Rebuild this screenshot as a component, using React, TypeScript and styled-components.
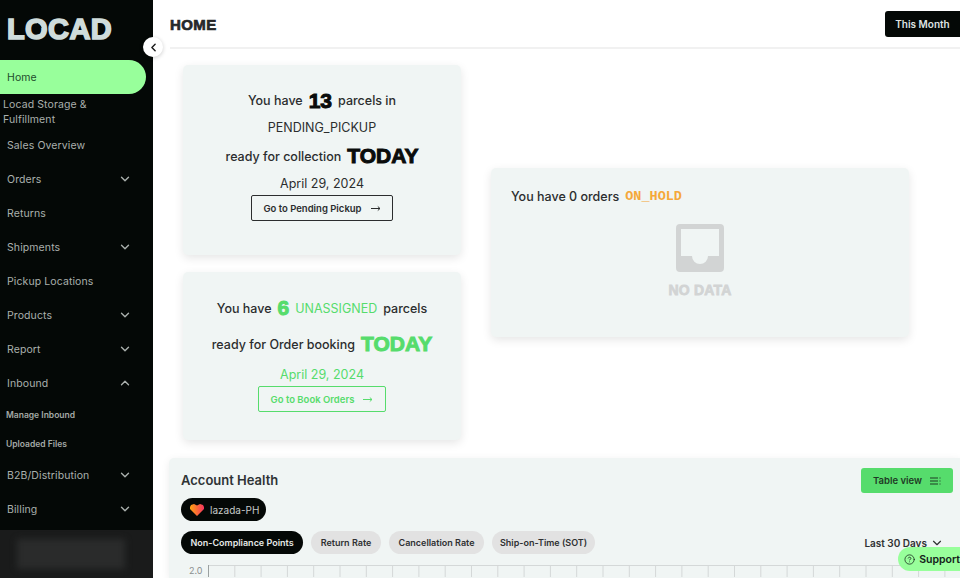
import React, { FC } from 'react';
import styled, { createGlobalStyle } from 'styled-components';
import { ChevronDown, ChevronLeft, ChevronUp, CircleHelp } from 'lucide-react';

const bodyFont = `Inter, 'Noto Sans', sans-serif`;
const blockFont = `'Liberation Sans', Arial, sans-serif`;
const green = '#56dc6c';

const GlobalStyle = createGlobalStyle`
    html, body {
        margin: 0;
        padding: 0;
        width: 960px;
        height: 578px;
        overflow: hidden;
        background: #fff;
        font-family: ${bodyFont};
    }
    * {
        box-sizing: border-box;
    }
`;

const Page = styled.div`
    position: relative;
    display: flex;
    width: 960px;
    height: 578px;
    overflow: hidden;
`;

const Sidebar = styled.aside`
    width: 153px;
    flex: none;
    height: 100%;
    background: #040806;
    display: flex;
    flex-direction: column;
`;

const Logo = styled.div`
    position: relative;
    height: 60px;
    padding: 13px 0 0 7px;
    font-family: ${blockFont};
    font-weight: 700;
    font-size: 29px;
    line-height: 32px;
    letter-spacing: 0.4px;
    color: #cfdcdb;
    -webkit-text-stroke: 1.6px #cfdcdb;
`;

const LogoHouse = styled.svg`
    position: absolute;
    left: 33px;
    top: 23px;
`;

const Nav = styled.nav`
    flex: 1;
    display: flex;
    flex-direction: column;
`;

const NavRow = styled.div<{ $active?: boolean }>`
    height: ${({ $active }) => ($active ? 34 : 34)}px;
    width: ${({ $active }) => ($active ? '146px' : '100%')};
    flex: none;
    display: flex;
    align-items: center;
    justify-content: space-between;
    padding: 0 21px 0 7px;
    font-size: 10.5px;
    letter-spacing: 0.1px;
    color: ${({ $active }) => ($active ? '#1f4d2c' : '#aab0ad')};
    background: ${({ $active }) => ($active ? '#98ff9b' : 'transparent')};
    border-radius: ${({ $active }) => ($active ? '0 17px 17px 0' : '0')};
`;

const WrappedRow = styled.div`
    height: 34px;
    flex: none;
    padding: 3px 20px 0 3px;
    font-size: 10.5px;
    line-height: 15px;
    letter-spacing: 0.1px;
    color: #aab0ad;
`;

const SubRow = styled.div<{ $height: number }>`
    height: ${({ $height }) => $height}px;
    flex: none;
    display: flex;
    align-items: center;
    padding-left: 6px;
    font-size: 8.5px;
    font-weight: 600;
    color: #a4aaa7;
`;

const SidebarFooter = styled.div`
    height: 48px;
    flex: none;
    background: #1a1b1b;
    display: flex;
    align-items: center;
    padding-left: 17px;
`;

const BlurredUser = styled.div`
    width: 108px;
    height: 30px;
    background: #2a2b2b;
    filter: blur(3px);
`;

const CollapseButton = styled.div`
    position: absolute;
    left: 143px;
    top: 37px;
    width: 20px;
    height: 20px;
    border-radius: 50%;
    background: #fff;
    box-shadow: 0 1px 4px rgba(0, 0, 0, 0.2);
    display: flex;
    align-items: center;
    justify-content: center;
    color: #1a1a1a;
`;

const Main = styled.main`
    flex: 1;
    min-width: 0;
    display: flex;
    flex-direction: column;
`;

const Header = styled.header`
    height: 49px;
    flex: none;
    margin-left: 17px;
    padding-top: 11px;
    border-bottom: 2px solid #f1f1f1;
    display: flex;
    justify-content: space-between;
    align-items: flex-start;
`;

const PageTitle = styled.h1`
    margin: 0;
    font-family: ${blockFont};
    font-weight: 700;
    font-size: 15px;
    line-height: 28px;
    letter-spacing: 0.4px;
    color: #26282a;
    -webkit-text-stroke: 0.7px #26282a;
`;

const MonthButton = styled.div`
    width: 75px;
    height: 26px;
    background: #040806;
    color: #dfe3e1;
    border-radius: 3px 0 0 3px;
    font-size: 10px;
    font-weight: 600;
    display: flex;
    align-items: center;
    justify-content: center;
`;

const CardGrid = styled.div`
    display: grid;
    grid-template-columns: 278px 418px;
    column-gap: 30px;
    align-items: center;
    padding: 16px 0 0 30px;
`;

const LeftColumn = styled.div`
    display: flex;
    flex-direction: column;
    gap: 17px;
`;

const Card = styled.section<{ $height: number }>`
    height: ${({ $height }) => $height}px;
    background: #f0f5f4;
    border-radius: 5px;
    box-shadow: 0 3px 10px rgba(0, 0, 0, 0.1);
    display: flex;
    flex-direction: column;
    align-items: center;
`;

const CardLine = styled.div<{ $height: number; $color?: string }>`
    height: ${({ $height }) => $height}px;
    display: flex;
    align-items: center;
    justify-content: center;
    gap: 6px;
    font-size: 12.5px;
    font-weight: 500;
    white-space: nowrap;
    color: ${({ $color }) => $color || '#2b2d2e'};
`;

const Block = styled.span<{ $size: number; $color?: string }>`
    font-family: ${blockFont};
    font-weight: 700;
    font-size: ${({ $size }) => $size}px;
    color: ${({ $color }) => $color || '#0a0c0b'};
    -webkit-text-stroke: 1px ${({ $color }) => $color || '#0a0c0b'};
`;

const Status = styled.span<{ $color?: string }>`
    font-weight: 400;
    color: ${({ $color }) => $color || '#2b2d2e'};
`;

const GoButton = styled.div<{ $color: string; $width: number }>`
    width: ${({ $width }) => $width}px;
    height: 26px;
    flex: none;
    border: 1px solid ${({ $color }) => $color};
    border-radius: 2px;
    color: ${({ $color }) => $color};
    font-size: 9.5px;
    font-weight: 600;
    display: flex;
    align-items: center;
    justify-content: center;
    gap: 8px;
`;

const HoldCard = styled.section`
    height: 169px;
    background: #f0f5f4;
    border-radius: 5px;
    box-shadow: 0 3px 10px rgba(0, 0, 0, 0.1);
    padding: 0 20px;
    display: flex;
    flex-direction: column;
`;

const HoldTitle = styled.div`
    height: 56px;
    flex: none;
    display: flex;
    align-items: center;
    gap: 6px;
    font-size: 12.5px;
    font-weight: 500;
    color: #2b2d2e;
`;

const HoldStatus = styled.span`
    font-family: 'Liberation Mono', monospace;
    font-weight: 700;
    font-size: 13.5px;
    color: #f5a83a;
`;

const EmptyState = styled.div`
    display: flex;
    flex-direction: column;
    align-items: center;
    gap: 11px;
`;

const NoData = styled.div`
    font-family: ${blockFont};
    font-weight: 700;
    font-size: 14px;
    line-height: 14px;
    letter-spacing: 0.2px;
    color: #d2d4d4;
    -webkit-text-stroke: 0.8px #d2d4d4;
`;

const HealthPanel = styled.section`
    flex: 1;
    margin: 18px 0 0 16px;
    background: #f0f5f4;
    border-radius: 5px 0 0 0;
    box-shadow: 0 2px 8px rgba(0, 0, 0, 0.08);
    padding: 10px 7px 0 12px;
    min-height: 0;
`;

const HealthTop = styled.div`
    display: flex;
    justify-content: space-between;
    align-items: flex-start;
    height: 30px;
`;

const HealthTitle = styled.h2`
    margin: 0;
    font-size: 13px;
    font-weight: 600;
    line-height: 24px;
    color: #2f3334;
`;

const TableButton = styled.div`
    width: 92px;
    height: 25px;
    background: ${green};
    border-radius: 3px;
    font-size: 9.5px;
    font-weight: 600;
    color: #1f3a25;
    display: flex;
    align-items: center;
    justify-content: center;
    gap: 8px;
`;

const ShopChip = styled.div`
    width: 85px;
    height: 23px;
    background: #040806;
    border-radius: 12px;
    color: #c7cbc9;
    font-size: 10px;
    display: flex;
    align-items: center;
    gap: 6px;
    padding-left: 9px;
`;

const TabRow = styled.div`
    margin-top: 10px;
    height: 23px;
    display: flex;
    align-items: center;
    gap: 8px;
`;

const Tab = styled.div<{ $active?: boolean; $width: number }>`
    width: ${({ $width }) => $width}px;
    height: 23px;
    border-radius: 12px;
    background: ${({ $active }) => ($active ? '#040806' : '#e2e2e2')};
    color: ${({ $active }) => ($active ? '#e4e7e5' : '#2f3132')};
    font-size: 9px;
    font-weight: 600;
    white-space: nowrap;
    display: flex;
    align-items: center;
    justify-content: center;
`;

const RangeSelect = styled.div`
    margin-left: auto;
    margin-right: 9px;
    display: flex;
    align-items: center;
    gap: 3px;
    font-size: 10px;
    font-weight: 600;
    color: #2f3132;
`;

const ChartArea = styled.div`
    margin-top: 11px;
    display: flex;
    align-items: flex-start;
    gap: 5px;
    padding-left: 8px;
`;

const AxisLabel = styled.span`
    font-size: 9px;
    line-height: 14px;
    margin-top: -1px;
    color: #8b8f8f;
`;

const SupportButton = styled.div`
    position: absolute;
    right: 0;
    top: 547px;
    width: 62px;
    height: 24px;
    background: #98ff9b;
    border-radius: 12px 0 0 12px;
    font-size: 10.5px;
    font-weight: 600;
    color: #14221a;
    display: flex;
    align-items: center;
    gap: 4px;
    padding-left: 6px;
`;

const ArrowIcon: FC = () => (
    <svg width="11" height="7" viewBox="0 0 11 7" fill="none" stroke="currentColor" strokeWidth="1">
        <path d="M1 3.5h9M7.8 1.5l2.2 2-2.2 2" />
    </svg>
);

const HouseMark: FC = () => (
    <LogoHouse width="9" height="11" viewBox="0 0 9 11" fill="#040806">
        <path d="M4.5 0L9 4.5H7.2V7H1.8V4.5H0zM1.8 8h5.4v2.6H1.8z" />
    </LogoHouse>
);

const InboxIcon: FC = () => (
    <svg width="48" height="48" viewBox="0 0 48 48">
        <path
            fill="#d2d4d4"
            d="M4 0h40a4 4 0 0 1 4 4v40a4 4 0 0 1-4 4H4a4 4 0 0 1-4-4V4a4 4 0 0 1 4-4zM5 5v27h11a8 8 0 0 0 16 0h11V5z"
            fillRule="evenodd"
        />
    </svg>
);

const ListIcon: FC = () => (
    <svg width="11" height="8" viewBox="0 0 11 8" fill="none" stroke="#1f3a25" strokeWidth="1">
        <path d="M0 1h8M0 4h8M0 7h8" />
        <path d="M9 1h2M9 4h2M9 7h2" opacity="0.5" />
    </svg>
);

const LazadaHeart: FC = () => (
    <svg width="14" height="12" viewBox="0 0 14 12">
        <defs>
            <linearGradient id="lazada" x1="0" y1="0" x2="1" y2="0">
                <stop offset="0" stopColor="#ffa310" />
                <stop offset="1" stopColor="#f5345f" />
            </linearGradient>
        </defs>
        <path fill="url(#lazada)" d="M1 1l3-1 3 1.5L10 0l3 1 1 2v2L7 12 0 5V3z" />
    </svg>
);

// ось графика, дальше экран обрезает
const ChartGrid: FC = () => {
    const ticks = Array.from({ length: 29 }, (_, i) => i);
    return (
        <svg width="760" height="12">
            <line x1="0" y1="0.5" x2="760" y2="0.5" stroke="#d4d8d8" />
            {ticks.map(i => (
                <line key={i} x1={i * 26.3 + 0.5} y1="0" x2={i * 26.3 + 0.5} y2="12" stroke={i === 0 ? '#9aa0a0' : '#d4d8d8'} />
            ))}
        </svg>
    );
};

const navAfterStorage = [
    { label: 'Sales Overview' },
    { label: 'Orders', arrow: 'down' },
    { label: 'Returns' },
    { label: 'Shipments', arrow: 'down' },
    { label: 'Pickup Locations' },
    { label: 'Products', arrow: 'down' },
    { label: 'Report', arrow: 'down' },
    { label: 'Inbound', arrow: 'up' }
];

const App: FC = () => {
    return (
        <Page>
            <GlobalStyle />
            <Sidebar>
                <Logo>
                    LOCAD
                    <HouseMark />
                </Logo>
                <Nav>
                    <NavRow $active>Home</NavRow>
                    <WrappedRow>Locad Storage &amp; Fulfillment</WrappedRow>
                    {navAfterStorage.map(item => (
                        <NavRow key={item.label}>
                            {item.label}
                            {item.arrow === 'down' && <ChevronDown size={14} strokeWidth={2.4} />}
                            {item.arrow === 'up' && <ChevronUp size={14} strokeWidth={2.4} />}
                        </NavRow>
                    ))}
                    <SubRow $height={30}>Manage Inbound</SubRow>
                    <SubRow $height={28}>Uploaded Files</SubRow>
                    <NavRow>
                        B2B/Distribution
                        <ChevronDown size={14} strokeWidth={2.4} />
                    </NavRow>
                    <NavRow>
                        Billing
                        <ChevronDown size={14} strokeWidth={2.4} />
                    </NavRow>
                </Nav>
                <SidebarFooter>
                    <BlurredUser />
                </SidebarFooter>
            </Sidebar>

            <CollapseButton>
                <ChevronLeft size={13} strokeWidth={2.6} />
            </CollapseButton>

            <Main>
                <Header>
                    <PageTitle>HOME</PageTitle>
                    <MonthButton>This Month</MonthButton>
                </Header>

                <CardGrid>
                    <LeftColumn>
                        <Card $height={190}>
                            <CardLine $height={27} style={{ marginTop: 22 }}>
                                You have <Block $size={21}>13</Block> parcels in
                            </CardLine>
                            <CardLine $height={27}>
                                <Status>PENDING_PICKUP</Status>
                            </CardLine>
                            <CardLine $height={30}>
                                ready for collection <Block $size={21}>TODAY</Block>
                            </CardLine>
                            <CardLine $height={24}>
                                <Status>April 29, 2024</Status>
                            </CardLine>
                            <GoButton $color="#2b2d2e" $width={142}>
                                Go to Pending Pickup <ArrowIcon />
                            </GoButton>
                        </Card>
                        <Card $height={168}>
                            <CardLine $height={36} style={{ marginTop: 18 }}>
                                You have <Block $size={21} $color={green}>6</Block>
                                <Status $color={green}>UNASSIGNED</Status> parcels
                            </CardLine>
                            <CardLine $height={36}>
                                ready for Order booking <Block $size={21} $color={green}>TODAY</Block>
                            </CardLine>
                            <CardLine $height={24} $color={green}>
                                <Status $color={green}>April 29, 2024</Status>
                            </CardLine>
                            <GoButton $color={green} $width={128}>
                                Go to Book Orders <ArrowIcon />
                            </GoButton>
                        </Card>
                    </LeftColumn>
                    <HoldCard>
                        <HoldTitle>
                            You have 0 orders <HoldStatus>ON_HOLD</HoldStatus>
                        </HoldTitle>
                        <EmptyState>
                            <InboxIcon />
                            <NoData>NO DATA</NoData>
                        </EmptyState>
                    </HoldCard>
                </CardGrid>

                <HealthPanel>
                    <HealthTop>
                        <HealthTitle>Account Health</HealthTitle>
                        <TableButton>
                            Table view <ListIcon />
                        </TableButton>
                    </HealthTop>
                    <ShopChip>
                        <LazadaHeart /> lazada-PH
                    </ShopChip>
                    <TabRow>
                        <Tab $active $width={122}>Non-Compliance Points</Tab>
                        <Tab $width={70}>Return Rate</Tab>
                        <Tab $width={95}>Cancellation Rate</Tab>
                        <Tab $width={103}>Ship-on-Time (SOT)</Tab>
                        <RangeSelect>
                            Last 30 Days <ChevronDown size={14} strokeWidth={2} />
                        </RangeSelect>
                    </TabRow>
                    <ChartArea>
                        <AxisLabel>2.0</AxisLabel>
                        <ChartGrid />
                    </ChartArea>
                </HealthPanel>
            </Main>

            <SupportButton>
                <CircleHelp size={13} strokeWidth={1.6} />
                Support
            </SupportButton>
        </Page>
    );
};

export default App;
